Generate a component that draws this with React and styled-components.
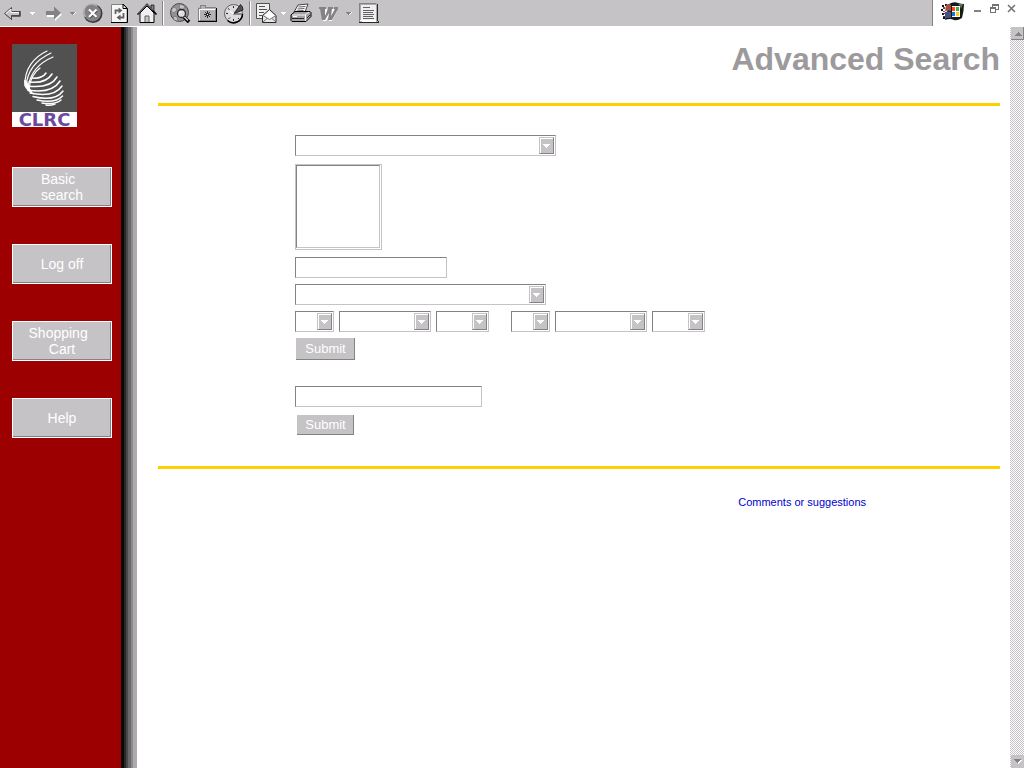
import React from 'react';
import styled, { createGlobalStyle } from 'styled-components';

const face = '#c6c3c6';
const shade = '#848284';

const GlobalStyle = createGlobalStyle`
  *, *::before, *::after { box-sizing: border-box; }
  body {
    margin: 0;
    background: #fff;
    font-family: "Liberation Sans", Arial, sans-serif;
  }
  button, input, select { font-family: inherit; }
`;

const Page = styled.div`
  display: flex;
  flex-direction: column;
  min-height: 100vh;
`;

const TopBar = styled.header`
  display: flex;
  height: 27px;
  border-bottom: 1px solid #fff;
`;

const Toolbar = styled.div`
  display: flex;
  flex: 1;
  align-items: center;
  background: ${face};
`;

const Tool = styled.button`
  display: flex;
  align-items: center;
  justify-content: center;
  flex: none;
  width: ${(p) => p.$width || 27}px;
  height: 26px;
  padding: 0;
  border: 0;
  background: none;
`;

const Separator = styled.span`
  width: 6px;
  height: 24px;
  display: flex;
  justify-content: center;
  &::before {
    content: "";
    width: 2px;
    background: #fff;
    border-left: 1px solid ${shade};
  }
`;

const WindowBar = styled.div`
  display: flex;
  align-items: flex-start;
  gap: 4px;
  padding: 0 4px 0 8px;
  border-left: 1px solid ${shade};
`;

const WindowButtons = styled.div`
  display: flex;
`;

const WindowButton = styled.button`
  display: flex;
  justify-content: center;
  width: 17px;
  height: 18px;
  padding: 3px 0 0;
  border: 0;
  background: none;
`;

const Body = styled.div`
  display: flex;
  flex: 1;
`;

const Sidebar = styled.aside`
  width: 121px;
  flex: none;
  padding: 17px 9px 17px 12px;
  background: #9c0000;
`;

const Spine = styled.div`
  width: 16px;
  flex: none;
  background: linear-gradient(
    to right,
    #080808 0 3px,
    #292829 3px 5px,
    #4a494a 5px 7px,
    #6b696b 7px 10px,
    #8c8a8c 10px 12px,
    #adaaad 12px 16px
  );
`;

const Logo = styled.a`
  display: block;
  width: 65px;
  background: #525152;
  text-decoration: none;
  svg { display: block; }
`;

const LogoName = styled.span`
  display: block;
  height: 15px;
  background: #fff;
  color: #6b499c;
  font: bold 18px/15px "DejaVu Sans", sans-serif;
  text-align: center;
`;

const Nav = styled.nav`
  display: flex;
  flex-direction: column;
  gap: 37px;
  margin-top: 40px;
`;

const NavButton = styled.button`
  width: 100px;
  height: 40px;
  padding: 0;
  border: 1px solid #fff;
  background: ${face};
  box-shadow: inset -1px -1px 0 ${shade};
  color: #fff;
  font-size: 14px;
  line-height: 16px;
`;

const Main = styled.main`
  flex: 1;
  padding: 14px 10px 20px 21px;
`;

const Title = styled.h1`
  margin: 0 0 26px;
  color: #9c9a9c;
  font-size: 32px;
  line-height: 36px;
  text-align: right;
`;

const Rule = styled.hr`
  height: 3px;
  margin: 0;
  border: 0;
  background: #ffcf00;
`;

const Form = styled.form`
  display: flex;
  flex-direction: column;
  align-items: flex-start;
  gap: 6px;
  margin: ${(p) => (p.$second ? '26px 0 31px 137px' : '29px 0 0 137px')};
`;

const edges = `
  border: 1px solid;
  border-color: ${shade} ${face} ${face} ${shade};
  border-radius: 0;
  background: #fff;
  outline: 0;
`;

const TextBox = styled.input`
  ${edges}
  width: ${(p) => p.$width}px;
  height: 21px;
  padding: 0 4px;
`;

const ListFrame = styled.div`
  width: 87px;
  height: 86px;
  margin: 2px 0 1px;
  padding: 0 1px 1px 0;
  border: 1px solid ${face};
`;

const List = styled.select`
  ${edges}
  display: block;
  width: 100%;
  height: 100%;
  padding: 0;
  overflow: hidden;
`;

const DropFrame = styled.span`
  position: relative;
  display: block;
  width: ${(p) => p.$width}px;
  height: 21px;
`;

const DropSelect = styled.select`
  ${edges}
  display: block;
  width: 100%;
  height: 100%;
  padding: 0 18px 0 4px;
  appearance: none;
`;

const DropArrow = styled.span`
  position: absolute;
  top: 2px;
  right: 2px;
  display: flex;
  align-items: center;
  justify-content: center;
  width: 15px;
  height: 17px;
  border: 1px solid;
  border-color: ${face} ${shade} ${shade} ${face};
  background: ${face};
  box-shadow: inset 1px 1px 0 #fff;
  pointer-events: none;
`;

const Dates = styled.div`
  display: flex;
  gap: 22px;
`;

const DateGroup = styled.div`
  display: flex;
  gap: 5px;
`;

const Submit = styled.button`
  width: ${(p) => (p.$small ? 57 : 59)}px;
  height: ${(p) => (p.$small ? 20 : 22)}px;
  margin-left: ${(p) => (p.$small ? 2 : 1)}px;
  margin-top: ${(p) => (p.$small ? 2 : 0)}px;
  padding: 0;
  border: 0;
  background: ${face};
  box-shadow: inset -1px -1px 0 ${shade};
  color: #fff;
  font-size: 13px;
  line-height: 16px;
`;

const Footer = styled.footer`
  margin-top: 26px;
  padding-right: 134px;
  font-size: 11px;
  line-height: 14px;
  text-align: right;
  a { color: #0000ce; text-decoration: none; }
`;

const ScrollTrack = styled.div`
  display: flex;
  flex-direction: column;
  justify-content: space-between;
  align-items: flex-end;
  flex: none;
  width: 14px;
  background: repeating-conic-gradient(${face} 0 25%, #fff 0 50%) 0 0 / 2px 2px;
`;

const ScrollButton = styled.button`
  display: flex;
  align-items: center;
  justify-content: center;
  width: 13px;
  height: 13px;
  padding: 0;
  border: 0;
  background: ${face};
  box-shadow: inset -1px -1px 0 ${(p) => (p.$up ? shade : face)};
`;

const Icon = ({ children, smooth }) => (
  <svg width="22" height="22" viewBox="0 0 22 22" fill="none" aria-hidden="true"
    shapeRendering={smooth ? 'auto' : 'crispEdges'}>
    {children}
  </svg>
);

const BackIcon = () => (
  <Icon smooth>
    <path d="M3 12 10 5.5V9h8.5v5.500H10V18z" fill="#000" />
    <path d="M2.500 11.500 9.500 5.500V9.500h8v4h-8v4z" fill="#c6c3c6" stroke="#4a494a" />
    <path d="M4 11.500 9 7v3.500h8" stroke="#fff" />
  </Icon>
);

const ForwardIcon = () => (
  <Icon smooth>
    <path d="M20 12.500 13 19v-4H5v-4h8V6z" fill="#fff" />
    <path d="M19 11 12 17.500V13H4V9h8V4.500z" fill="#848284" />
  </Icon>
);

const Chevron = ({ light }) => (
  <svg width="7" height="5" viewBox="0 0 7 5" shapeRendering="crispEdges" aria-hidden="true">
    {!light && <path d="M2 1h5L4 5z" fill="#fff" />}
    <path d="M1 1h5v1H5v1H4v1H3V3H2V2H1z" fill={light ? '#fff' : '#848284'} />
  </svg>
);

const StopIcon = () => (
  <Icon smooth>
    <circle cx="11" cy="11.500" r="9.500" fill="#393839" />
    <circle cx="10.500" cy="11" r="8.500" fill="#848284" />
    <path d="M3.500 15A8 8 0 0 1 15 4" stroke="#b5b2b5" strokeWidth="1.500" />
    <path d="m7.500 8.500 7 7m0-7-7 7" stroke="#424142" strokeWidth="2.500" />
    <path d="m7 7.500 7.500 7.500m0-7.500-7.500 7.500" stroke="#fff" strokeWidth="2.200" />
  </Icon>
);

const RefreshIcon = () => (
  <Icon smooth>
    <path d="M2.500 2.500h11.500l4 4v14H2.500z" fill="#f7f7f7" stroke="#848284" />
    <path d="M2 20.500h16.500V6.500L14 2v4.500h4" stroke="#000" />
    <path d="M6.500 12V8.500H10M14.500 11v4.500H11" stroke="#636163" strokeWidth="1.800" />
    <path d="m9.500 5.500 4 3-4 3zM11.500 12.500l-4 3 4 3z" fill="#636163" />
  </Icon>
);

const HomeIcon = () => (
  <Icon smooth>
    <path d="M15 3h3v6h-3z" fill="#848284" stroke="#000" strokeWidth=".7" />
    <path d="M4 11v9.500h14V11l-7-7z" fill="#efefef" stroke="#000" />
    <path d="M4.500 12v8" stroke="#848284" />
    <path d="m1.500 12.500 9.500-10 9.500 10" stroke="#000" strokeWidth="1.600" />
    <path d="m2 11.500 9-9 6 6" stroke="#adaaad" />
    <path d="M9 20v-6h4v6" fill="#c6c3c6" stroke="#636163" />
  </Icon>
);

const SearchIcon = () => (
  <Icon smooth>
    <circle cx="10.500" cy="10.500" r="9" fill="#949294" stroke="#4a494a" />
    <path d="M4 5q3 0 4 3l-3 3-3-2zM11 2l5 2-2 4-4-2zM4 14l4 1 1 4-4-1z" fill="#c6c3c6" stroke="#636163" strokeWidth=".6" />
    <path d="m15 15 5 5" stroke="#000" strokeWidth="3.500" />
    <path d="m15 14.500 4 4" stroke="#dedbde" strokeWidth="1.500" />
    <circle cx="12.500" cy="11.500" r="4" fill="#dedfde" stroke="#292829" strokeWidth="1.300" />
    <path d="M10.500 11.500q0-2 2-2" stroke="#fff" />
  </Icon>
);

const FavoritesIcon = () => (
  <Icon>
    <path d="M2 5h2V3h6v2h10v14H2z" fill="#b5b2b5" />
    <path d="M2.500 19V6.500H4.500V3.500h5v2h10" stroke="#848284" />
    <path d="M3.500 18V7.500H19" stroke="#fff" />
    <path d="M20.500 6v13.500H2" stroke="#000" />
    <path d="M19.500 8v10.500H4" stroke="#848284" />
    <path d="M11.500 9v7M8 12.500h7M9 10l5 5m0-5-5 5" stroke="#292829" />
    <path d="M11 12h1v1h-1z" fill="#fff" />
  </Icon>
);

const HistoryIcon = () => (
  <Icon smooth>
    <circle cx="10.500" cy="11.500" r="9" fill="#dedbde" stroke="#636163" />
    <path d="M19.500 12a9 9 0 0 1-15 6.500" stroke="#000" strokeWidth="1.500" />
    <path d="m10.500 12 7-9.500q2.500 2 2.500 5.500z" fill="#525152" stroke="#000" strokeWidth=".7" />
    <path d="M10.500 12H19" stroke="#636163" strokeWidth="1.300" />
    <path d="M10.500 4v2M3 11.500h2M10.500 17v2M5 6.500l1.500 1M5.500 17l1.500-1.500M16 17l-1-1" stroke="#292829" />
    <path d="m7 9 3.500 3" stroke="#fff" strokeWidth="1.500" />
  </Icon>
);

const MailIcon = () => (
  <Icon smooth>
    <path d="M1.500 1.500h13v15h-13z" fill="#efefef" stroke="#525152" />
    <path d="M4 4.500h6M4 7.500h8M4 10.500h5M4 13.500h3" stroke="#525152" />
    <path d="M7.500 20.500v-7l7-6 6.500 6v7z" fill="#e7e7e7" stroke="#292829" />
    <path d="m9.500 14 5-5 5 5-5 3.500z" fill="#fff" />
    <path d="M8 13.500l6.500 4 6.500-4M8 20l4-3.500M21 20l-4-3.500" stroke="#737173" />
  </Icon>
);

const PrintIcon = () => (
  <Icon smooth>
    <path d="m8 3 10-1-3 8H4z" fill="#fff" stroke="#424142" />
    <path d="m8.500 5 7-.5M7.500 7l7-.5M6.500 9l7-.5" stroke="#636163" />
    <path d="m1 13 4-3.500h15l1 1v4l-5 5H2l-1-1z" fill="#a5a2a5" stroke="#000" />
    <path d="M2 13h13l4-3M15.500 13v6" stroke="#f7f7f7" />
    <path d="M2 16.500h12" stroke="#292829" />
    <path d="m17 16 3-3" stroke="#292829" />
    <path d="M3 14.500h4" stroke="#fff" />
  </Icon>
);

const WordIcon = () => (
  <Icon smooth>
    <path d="M3 7h7v2l-1 6 3-6V7h5v2l-1 5 2-5V7h2v2l-5 10h-3l1-6-4 6H6L4 9z" fill="#fff" />
    <path d="M2 5h7v2H8v7l3-7V5h5v2h-1l-1 7 4-7h-1V5h4v2l-6 11h-4l1-7-4 7H5L3 7H2z" fill="#848284" />
  </Icon>
);

const NotesIcon = () => (
  <Icon>
    <path d="M1 1h18v18h2v2H1z" fill="#adaaad" />
    <path d="M1.500 20V1.500H18" stroke="#848284" />
    <path d="M3 3h15v15H3z" fill="#efefef" />
    <path d="M1 20.500h19.500V19M19.500 2v17" stroke="#292829" />
    <path d="M5 5.500h7M5 8.500h11M5 10.500h10M5 12.500h11M5 14.500h10M5 16.500h11" stroke="#636163" />
    <path d="M2 18.500h15v1H4" stroke="#fff" />
  </Icon>
);

const WindowsFlag = () => (
  <svg width="24" height="22" viewBox="0 0 24 22" aria-hidden="true">
    <path d="M8 4q5-3 9-1 3 1 6 1 0 6-2 14-5 3-8 2-4-2-9 0z" fill="#181818" />
    <path d="M1 5h2v2H1zM4 4h2v2H4zM0 9h2v2H0zM1 13h2v2H1zM2 17h2v2H2z" fill="#101010" />
    <path d="M5 5q3-2 5 0v6q-3-1-6 0z" fill="#a55142" />
    <path d="M4 12q3-1 6 0v6q-3-1-6 1z" fill="#4a5184" />
    <path d="M2 7h2v2H2zM2 11h2v1H2z" fill="#844139" />
    <path d="M2 13h2v1H2zM2 16h2v1H2z" fill="#31417b" />
    <path d="M11 6h8v11h-8z" fill="#fff" />
    <path d="M11 7h3v4h-3z" fill="#ff4918" />
    <path d="M15 7h3v4h-3z" fill="#4aaa4a" />
    <path d="M11 12h3v4h-3z" fill="#1875ce" />
    <path d="M15 12h3v4h-3z" fill="#f7cf18" />
    <path d="M17 4h5l-2 5-1-3z" fill="#527b42" />
  </svg>
);

const Swirl = () => (
  <svg width="65" height="68" viewBox="0 0 65 68" fill="none" stroke="#fff" aria-hidden="true">
    <g strokeWidth="1.200" strokeLinecap="round">
      <path d="M35 7C22 13 12 25 13 42" />
      <path d="M39 9C26 15 15 26 14 43" />
      <path d="M41 13C29 18 18 28 16 44" />
      <path d="M28 24C21 29 18 36 17 45" />
    </g>
    <g strokeWidth="1.500" strokeLinecap="round">
      <path d="M34 29Q30 35 20 34" />
      <path d="M40 30Q34 40 17 38" />
      <path d="M45 33Q38 45 15 42" />
      <path d="M48 37Q40 50 16 46" />
      <path d="M50 42Q42 54 18 49" />
      <path d="M51 47Q43 58 21 52.500" />
      <path d="M50.500 52Q43 60 25 56" />
      <path d="M49 56Q43 61 30 59" />
      <path d="M43 60Q38 62 34 61" />
    </g>
    <path d="M12 36q0 10 7 13l3 2q-5-7-7-14z" fill="#fff" stroke="none" />
  </svg>
);

const Drop = ({ width, label }) => (
  <DropFrame $width={width}>
    <DropSelect aria-label={label}>
      <option value="" />
    </DropSelect>
    <DropArrow>
      <svg width="7" height="4" viewBox="0 0 7 4" shapeRendering="crispEdges" aria-hidden="true">
        <path d="M0 0h7v1H6v1H5v1H4v1H3V3H2V2H1V1H0z" fill="#fff" />
      </svg>
    </DropArrow>
  </DropFrame>
);

const DateFields = ({ name }) => (
  <DateGroup>
    <Drop width={39} label={`${name} day`} />
    <Drop width={92} label={`${name} month`} />
    <Drop width={53} label={`${name} year`} />
  </DateGroup>
);

const BrowserBar = () => (
  <TopBar>
    <Toolbar>
      <Tool $width={26} aria-label="Back"><BackIcon /></Tool>
      <Tool $width={13} aria-label="Back history"><Chevron light /></Tool>
      <Tool aria-label="Forward"><ForwardIcon /></Tool>
      <Tool $width={13} aria-label="Forward history"><Chevron /></Tool>
      <Tool aria-label="Stop"><StopIcon /></Tool>
      <Tool aria-label="Refresh"><RefreshIcon /></Tool>
      <Tool aria-label="Home"><HomeIcon /></Tool>
      <Separator />
      <Tool aria-label="Search"><SearchIcon /></Tool>
      <Tool aria-label="Favorites"><FavoritesIcon /></Tool>
      <Tool aria-label="History"><HistoryIcon /></Tool>
      <Separator />
      <Tool $width={26} aria-label="Mail"><MailIcon /></Tool>
      <Tool $width={8} aria-label="Mail options"><Chevron light /></Tool>
      <Tool aria-label="Print"><PrintIcon /></Tool>
      <Tool $width={28} aria-label="Edit"><WordIcon /></Tool>
      <Tool $width={13} aria-label="Edit options"><Chevron /></Tool>
      <Tool aria-label="Discuss"><NotesIcon /></Tool>
    </Toolbar>
    <WindowBar>
      <WindowsFlag />
      <WindowButtons>
        <WindowButton aria-label="Minimize">
          <svg width="9" height="10" viewBox="0 0 9 10" shapeRendering="crispEdges">
            <path d="M1 7h7v2H1z" fill="#848284" />
          </svg>
        </WindowButton>
        <WindowButton aria-label="Restore">
          <svg width="9" height="10" viewBox="0 0 9 10" shapeRendering="crispEdges" fill="none" stroke="#737173">
            <path d="M2.500 4V1.500h6v5H6M2 2h7M.5 4.500h5v5h-5zM0 5h6" />
          </svg>
        </WindowButton>
        <WindowButton aria-label="Close">
          <svg width="9" height="10" viewBox="0 0 9 10">
            <path d="m1 2 7 7m0-7L1 9" stroke="#737173" strokeWidth="1.500" />
          </svg>
        </WindowButton>
      </WindowButtons>
    </WindowBar>
  </TopBar>
);

export default function App() {
  const stay = (e) => e.preventDefault();
  return (
    <Page>
      <GlobalStyle />
      <BrowserBar />
      <Body>
        <Sidebar>
          <Logo href="#">
            <Swirl />
            <LogoName>CLRC</LogoName>
          </Logo>
          <Nav>
            <NavButton>Basic&nbsp;&nbsp;<br />search</NavButton>
            <NavButton>Log off</NavButton>
            <NavButton>Shopping&nbsp;&nbsp;<br />Cart</NavButton>
            <NavButton>Help</NavButton>
          </Nav>
        </Sidebar>
        <Spine />
        <Main>
          <Title>Advanced Search</Title>
          <Rule />
          <Form onSubmit={stay}>
            <Drop width={261} label="Category" />
            <ListFrame>
              <List multiple size={4} aria-label="Items" />
            </ListFrame>
            <TextBox $width={152} type="text" aria-label="Keyword" />
            <Drop width={251} label="Source" />
            <Dates>
              <DateFields name="From" />
              <DateFields name="To" />
            </Dates>
            <Submit>Submit</Submit>
          </Form>
          <Form $second onSubmit={stay}>
            <TextBox $width={187} type="text" aria-label="Search text" />
            <Submit $small>Submit</Submit>
          </Form>
          <Rule />
          <Footer>
            <a href="#">Comments or suggestions</a>
          </Footer>
        </Main>
        <ScrollTrack>
          <ScrollButton $up aria-label="Scroll up">
            <svg width="8" height="4" viewBox="0 0 8 4" shapeRendering="crispEdges">
              <path d="M0 4h8L4 0z" fill="#848284" />
            </svg>
          </ScrollButton>
          <ScrollButton aria-label="Scroll down">
            <svg width="8" height="5" viewBox="0 0 8 5" shapeRendering="crispEdges">
              <path d="M1 1h7L4 5z" fill="#fff" />
              <path d="M0 0h7L3.500 4z" fill="#848284" />
            </svg>
          </ScrollButton>
        </ScrollTrack>
      </Body>
    </Page>
  );
}
